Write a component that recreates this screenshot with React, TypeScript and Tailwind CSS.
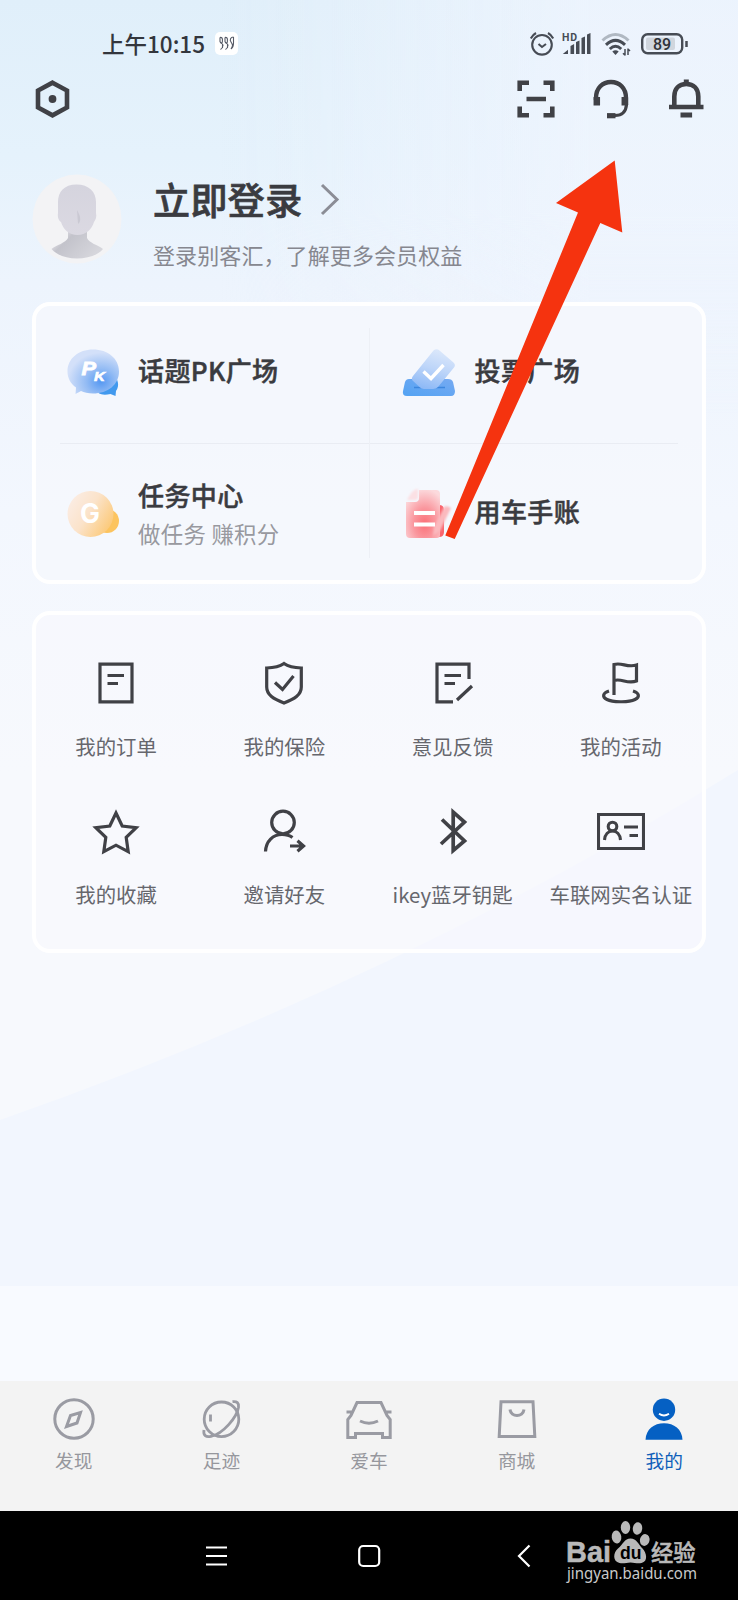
import type { ReactNode } from "react";

const INK = "#404146";

function Stroke({ w, h, width = 2.6, color = INK, children }: { w: number; h: number; width?: number; color?: string; children: ReactNode }) {
  return (
    <svg width={w} height={h} viewBox={`0 0 ${w} ${h}`} fill="none" stroke={color} strokeWidth={width} className="block shrink-0">
      {children}
    </svg>
  );
}

function StatusBar() {
  return (
    <div className="flex h-16 items-center pt-[23px] pl-[102px] pr-[50px]">
      <span className="-mt-[2px] w-[103px] text-[22.5px] leading-8 font-medium whitespace-nowrap text-[#33363d]">上午10:15</span>
      <svg width="23" height="23" viewBox="0 0 23 23" className="ml-[10px] block">
        <rect width="23" height="23" rx="5" fill="#fff" />
        <g fill="none" stroke="#555a66" strokeWidth="1.100">
          <path d="M5 5.500c3-1 3 4 1.500 6.500M5 5.500v4c1 3 3 1 3 4-.5 3-2.500 4-2.500 4M7.500 12v4" />
          <path d="M10 5.500c3-1 3 4 1.500 6.500M10 5.500v4c1 3 3 1 3 4-.5 3-2.500 4-2.500 4M12.500 12v4" />
          <path d="M18.500 5c-3 0-4 3-2.500 5 2 3 2 4 0 7M18.500 5v6c0 4-1 5-2.500 6" />
        </g>
      </svg>
      <div className="ml-auto flex items-center">
        <Stroke w={24} h={24} width={2.1} color="#474c55">
          <circle cx="12" cy="12.800" r="9.800" />
          <path d="M8.500 12l3.500 3 4-3M.8 6.500Q2.500 3 6 1M23.200 6.500Q21.500 3 18 1" />
        </Stroke>
        <svg width="29" height="24" viewBox="0 0 29 24" className="ml-2 block" fill="#474c55">
          <text x="0" y="8.800" fontSize="10.500" fontWeight="700" letterSpacing="0.800" fontFamily="Roboto, sans-serif">HD</text>
          <path d="M.8 22l5.200-4.200V22zM8.500 14l3.600-2v10H8.500zM14 10l3.500-1.500V22h-3.500zM19.500 6l3.500-1.500V22h-3.500zM25 2.500l3.500-1.500v21h-3.500z" />
        </svg>
        <svg width="30" height="24" viewBox="0 0 30 24" className="ml-[10px] block" fill="none">
          <path d="M1.500 8.500Q14.500-3.500 27.500 8.500" stroke="#b0b8c2" strokeWidth="3" />
          <path d="M5 12.800Q14.500 4 24 12.800M8.800 17Q14.500 11.500 20.200 17" stroke="#474c55" strokeWidth="3" />
          <path d="M11.300 19.500q3.200-2.500 6.400 0L14.500 23z" fill="#474c55" />
          <path d="M24 17v6.500M24 23.300l-2-2M27 23v-6.500M27 17l2 2" stroke="#474c55" strokeWidth="1.500" />
        </svg>
        <svg width="47" height="22" viewBox="0 0 47 22" className="ml-[10px] block">
          <rect x="1.200" y="1.200" width="40" height="19" rx="5.500" fill="none" stroke="#474c55" strokeWidth="2.400" />
          <rect x="5" y="4.500" width="29" height="12.500" rx="2" fill="#d0d6de" />
          <path d="M45.500 8v6" stroke="#474c55" strokeWidth="2.500" />
          <text x="21" y="16.500" textAnchor="middle" fontSize="16" fontWeight="500" fill="#2f333a" fontFamily="Roboto, sans-serif">89</text>
        </svg>
      </div>
    </div>
  );
}

function Toolbar() {
  return (
    <div className="flex h-[69px] items-center pl-[35px] pr-[34px]">
      <Stroke w={35} h={40} width={4.6}>
        <path d="M17.500 3.700l14.500 7.900v16.800l-14.500 7.900L3 28.400V11.600z" />
        <circle cx="17.500" cy="20" r="3.900" fill={INK} stroke="none" />
      </Stroke>
      <div className="ml-auto flex items-center gap-[38px]">
        <Stroke w={38} h={38} width={4.6}>
          <path d="M2.700 11V2.700H12M26.500 2.700h8.800V11M2.700 26.500v8.800H12M26.500 35.300h8.800v-8.800M9.500 19h19.500" />
        </Stroke>
        <Stroke w={37} h={40} width={4.4}>
          <path d="M3 21v-2C3 9 9.500 3 18 3s15 6 15 16v7" />
          <path d="M3.800 18v8.500M31.800 18v8.500" strokeWidth="6.500" />
          <path d="M33.500 25.500c-.5 7-4.500 11-11.500 11" strokeWidth="3.200" />
          <path d="M14 36.700h8.500" strokeWidth="5.200" />
        </Stroke>
        <Stroke w={36} h={40} width={4.6}>
          <path d="M1 28h34.500" />
          <path d="M6.300 28V17.500C6.300 9.500 11 5 18.300 5s12 4.500 12 12.500V28" />
          <path d="M18.300 .5v5M12.500 36h11.600" strokeWidth="5" />
        </Stroke>
      </div>
    </div>
  );
}

function Profile() {
  return (
    <div className="flex h-[169px] items-start pt-[41px] pl-8">
      <svg width="90" height="90" viewBox="0 0 90 90" className="block shrink-0">
        <defs>
          <linearGradient id="neck" x1="0" y1="0" x2="1" y2="0.600">
            <stop offset="0.300" stopColor="#d4d3da" />
            <stop offset="0.400" stopColor="#c3c3cb" />
            <stop offset="1" stopColor="#d6d6dc" />
          </linearGradient>
          <linearGradient id="face" x1="0" y1="0" x2="0" y2="1">
            <stop offset="0" stopColor="#d5d4de" />
            <stop offset="1" stopColor="#dbd9e2" />
          </linearGradient>
        </defs>
        <circle cx="45" cy="45" r="44.500" fill="#f3f3f5" />
        <path d="M36 54h19v10c2 5 11 7 16 11-5 6-15 9.500-26 9.500S25 81 19.500 75c5-4 14-6 16.500-11z" fill="url(#neck)" />
        <path d="M44.500 10.500C57 10.500 64 18 64 28v11c1 4-.5 7-2 9-2 7-8 13-16.500 13S31 55 29 48c-3-2-3.500-6-3-9V28c0-10 6-17.500 18.500-17.500z" fill="url(#face)" />
        <path d="M45 36c3 5 5 11 1 14z" fill="#cac9d3" />
      </svg>
      <div className="ml-[31px] flex flex-col">
        <div className="-mt-0.5 flex h-[54px] items-center">
          <span className="text-[37px] leading-[54px] font-medium tracking-[0.4px] text-[#3a3b40] [-webkit-text-stroke:0.7px_#3a3b40]">立即登录</span>
          <svg width="20" height="34" viewBox="0 0 20 34" fill="none" className="mt-px ml-[17px] block">
            <path d="M2 2L17 16.500 2 31" stroke="#8b8d96" strokeWidth="3" />
          </svg>
        </div>
        <p className="mt-3 text-[22px] leading-8 tracking-[0.1px] text-[#86878f]">登录别客汇，了解更多会员权益</p>
      </div>
    </div>
  );
}

function PkIcon() {
  return (
    <svg width="54" height="50" viewBox="0 0 54 50" className="block">
      <defs>
        <radialGradient id="pk" cx="0.650" cy="0.720" r="0.650">
          <stop offset="0" stopColor="#5598f2" />
          <stop offset="0.450" stopColor="#94bcf4" />
          <stop offset="1" stopColor="#d3e0f9" />
        </radialGradient>
      </defs>
      <path d="M47 27c5 3 7 11 3 16l-.5 5-5-2c-5 1-9 1-12-1z" fill="#4199ee" />
      <path d="M27 1.500c15 0 26 9 26 22s-11 22-26 22c-5 0-9-1-12-2.500l-5.500 3 .5-6.500C4.500 35.500 1.500 30 1.500 23.500c0-13 11-22 25.500-22z" fill="url(#pk)" />
      <text x="15.500" y="27" fontSize="19" fontWeight="700" fontStyle="italic" textLength="14.500" lengthAdjust="spacingAndGlyphs" fill="#fff" stroke="#fff" strokeWidth="0.800" fontFamily="Liberation Sans, sans-serif">P</text>
      <text x="28" y="32.500" fontSize="12.500" fontWeight="700" fontStyle="italic" textLength="11" lengthAdjust="spacingAndGlyphs" fill="#fff" stroke="#fff" strokeWidth="0.600" fontFamily="Liberation Sans, sans-serif">K</text>
    </svg>
  );
}

function VoteIcon() {
  return (
    <svg width="54" height="50" viewBox="0 0 54 50" className="-ml-px block">
      <defs>
        <linearGradient id="tray" x1="0" y1="1" x2="1" y2="0">
          <stop offset="0" stopColor="#53a3f3" />
          <stop offset="1" stopColor="#76aaf2" />
        </linearGradient>
        <linearGradient id="slip" x1="0.700" y1="0" x2="0.400" y2="1">
          <stop offset="0" stopColor="#dde9fb" />
          <stop offset="0.500" stopColor="#bdd5f9" />
          <stop offset="1" stopColor="#8fbaf6" />
        </linearGradient>
      </defs>
      <path d="M7 31h39q4 0 5 3l2 9q0 5-4 5H5q-5 0-4-5l2-9q1-3 4-3z" fill="url(#tray)" />
      <path d="M12 39.500h31" stroke="#3c87de" strokeWidth="1.500" />
      <path d="M31.500 2.500q3-2.500 6 0l14 12q2.500 2.500.5 5L36 39q-2 2-5 2h-9q-2.500 0-4.500-2l-7-6.500q-1.500-2 .5-4.500z" fill="url(#slip)" />
      <path d="M21.500 23.500l7.500 7L41.500 17" fill="none" stroke="#fff" strokeWidth="3.400" />
    </svg>
  );
}

function CoinIcon() {
  return (
    <svg width="54" height="50" viewBox="0 0 54 50" className="block">
      <defs>
        <linearGradient id="coin" x1="0" y1="0.100" x2="1" y2="0.700">
          <stop offset="0" stopColor="#fbeee8" />
          <stop offset="0.500" stopColor="#fbe3ca" />
          <stop offset="1" stopColor="#fcc977" />
        </linearGradient>
      </defs>
      <circle cx="41" cy="32" r="12" fill="#fcc45f" />
      <circle cx="24.500" cy="25" r="23" fill="url(#coin)" />
      <text x="24" y="34" textAnchor="middle" fontSize="26.500" fontWeight="700" fill="#fff" fontFamily="Inter, sans-serif">G</text>
    </svg>
  );
}

function LedgerIcon() {
  return (
    <svg width="54" height="54" viewBox="0 0 54 54" className="-ml-0.5 block">
      <defs>
        <radialGradient id="sheet" cx="0.550" cy="0.700" r="0.720">
          <stop offset="0" stopColor="#fb7078" />
          <stop offset="0.450" stopColor="#fa979e" />
          <stop offset="1" stopColor="#fcdadd" />
        </radialGradient>
        <filter id="haze" x="-20%" y="-20%" width="140%" height="140%">
          <feGaussianBlur stdDeviation="0.800" />
        </filter>
      </defs>
      <path d="M33 18h5q5 0 5 5v22q0 5-5 5h-5z" fill="#f9656d" />
      <path d="M18 3h17q4 0 4 4v41q0 3-3 3H9q-4 0-4-4V15h9q4 0 4-4z" fill="url(#sheet)" />
      <path d="M6 13Q12 1 17 2v8q0 3-3 3z" fill="#fbe0e4" filter="url(#haze)" />
      <path d="M43 20q3-2 7 1L39 44l-7 5 1-9z" fill="#fbb9be" filter="url(#haze)" />
      <path d="M13 26h21M13 37.500h21" stroke="#fff" strokeWidth="4" />
    </svg>
  );
}

function Feature({ icon, title, note }: { icon: ReactNode; title: string; note?: string }) {
  return (
    <div className="flex items-center pl-[34px]">
      <div className="w-[54px] shrink-0">{icon}</div>
      <div className={note ? "ml-[18px] flex flex-col gap-1" : "-mt-[5px] ml-[18px] flex flex-col"}>
        <span className="text-[26px] leading-[34px] font-medium tracking-[0.400px] text-[#3a3b40] [-webkit-text-stroke:0.5px_#3a3b40]">{title}</span>
        {note && <span className="text-[22.400px] leading-[34px] tracking-[0.300px] text-[#98999f]">{note}</span>}
      </div>
    </div>
  );
}

function Features() {
  return (
    <section className="relative mx-8 grid h-[282px] grid-cols-2 grid-rows-2 rounded-[18px] bg-[#f5f8fd]/80 pr-px ring-4 ring-white ring-inset">
      <Feature icon={<PkIcon />} title="话题PK广场" />
      <Feature icon={<VoteIcon />} title="投票广场" />
      <Feature icon={<CoinIcon />} title="任务中心" note="做任务 赚积分" />
      <Feature icon={<LedgerIcon />} title="用车手账" />
      <div className="absolute inset-x-7 top-[141px] h-px bg-[#e9ecf3]" />
      <div className="absolute inset-y-[26px] left-[337px] w-px bg-[#edf0f6]" />
    </section>
  );
}

const services: { label: string; icon: ReactNode }[] = [
  {
    label: "我的订单",
    icon: (
      <Stroke w={48} h={48} width={3.2}>
        <path d="M8 5.200h32v37.600H8zM15.500 16.500h16.500M15.500 24.500h10.500" />
      </Stroke>
    ),
  },
  {
    label: "我的保险",
    icon: (
      <Stroke w={48} h={48} width={3.2}>
        <path d="M24 4.500c5 3.500 11 4.300 17.300 4.500v19c0 8-7 12-17.300 16-10.300-4-17.300-8-17.300-16V9C13 8.800 19 8 24 4.500z" />
        <path d="M15 23.500l7.500 7L33.500 17" />
      </Stroke>
    ),
  },
  {
    label: "意见反馈",
    icon: (
      <Stroke w={48} h={48} width={3.2}>
        <path d="M24 42.800H8V5.200h32V20M15.500 16.500h16.500M15.500 24.500h10.500M28 41L43 27" />
      </Stroke>
    ),
  },
  {
    label: "我的活动",
    icon: (
      <Stroke w={48} h={48} width={3.2}>
        <path d="M17 36V5.500c8-2.500 13 3.500 22.500.5v16c-9.500 3.500-14.500-3-22.500-.5" />
        <path d="M12 32c-6.500 2-7 6-2 8.500s21 3.500 28 0c5-2.500 4.500-6.500-2-8.500" />
      </Stroke>
    ),
  },
  {
    label: "我的收藏",
    icon: (
      <Stroke w={48} h={48} width={3.2}>
        <path d="M24 6l6.200 13 14 1.600-10 9.800 2 14.300L24 38.200l-12.200 6.500 2-14.300-10-9.800 14-1.600z" />
      </Stroke>
    ),
  },
  {
    label: "邀请好友",
    icon: (
      <Stroke w={48} h={48} width={3.2}>
        <circle cx="23" cy="15.500" r="11.300" />
        <path d="M5.500 44.500C6 34 13 27.500 22 27.500c4 0 7.500.8 10.500 3M30 39h13M37.500 33.800l6 5.200-6 5.200" />
      </Stroke>
    ),
  },
  {
    label: "ikey蓝牙钥匙",
    icon: (
      <Stroke w={48} h={48} width={3.7}>
        <path d="M13 12.500L35.500 34 24.200 43.500V5L35.500 15 12 37" />
      </Stroke>
    ),
  },
  {
    label: "车联网实名认证",
    icon: (
      <Stroke w={48} h={48} width={3.1}>
        <path d="M1.500 7.500h45v34h-45z" />
        <circle cx="15.500" cy="19.500" r="4.300" />
        <path d="M7.500 33c.5-6 4-9 8-9s7.500 3 8 9M27 20h14M32.500 28.500h8.500" />
      </Stroke>
    ),
  },
];

function Services() {
  return (
    <section className="mx-8 mt-[27px] grid h-[342px] grid-cols-4 content-start gap-y-[46px] rounded-[18px] bg-[#f8f9fd]/60 pt-12 pr-px ring-4 ring-white ring-inset">
      {services.map((s) => (
        <div key={s.label} className="flex flex-col items-center gap-[25px] pb-px">
          {s.icon}
          <span className="text-[20.400px] leading-7 whitespace-nowrap text-[#66676d]">{s.label}</span>
        </div>
      ))}
    </section>
  );
}

const GREY = "#9a9ba3";

const tabs: { label: string; active?: boolean; icon: ReactNode }[] = [
  {
    label: "发现",
    icon: (
      <Stroke w={44} h={44} width={3} color={GREY}>
        <circle cx="22" cy="22" r="19.200" />
        <path d="M28.500 15.500l-3.500 10.500-10.500 3.500 4-11z" />
      </Stroke>
    ),
  },
  {
    label: "足迹",
    icon: (
      <Stroke w={44} h={44} width={2.8} color={GREY}>
        <circle cx="22.500" cy="22.300" r="17.300" />
        <path d="M33.500 4.700c4.500-.5 6.500 1 6 5.500C38 20 24 37 12 39.300c-5 1-8-.5-7-6.300M11.500 17.500v7" />
      </Stroke>
    ),
  },
  {
    label: "爱车",
    icon: (
      <Stroke w={48} h={44} width={3} color={GREY}>
        <path d="M12 5.500h24l6 13 3.200 4V40.500H37.500v-4h-27v4H2.800V22.500l3.200-4zM1.500 15H8M46.500 15H40M15 24c6 3 12 3 18 0" />
      </Stroke>
    ),
  },
  {
    label: "商城",
    icon: (
      <Stroke w={44} h={44} width={3} color={GREY}>
        <path d="M6 4.700h32l1.800 34.800h-35.600zM15 12.500c1 8 13 8 14 0" />
      </Stroke>
    ),
  },
  {
    label: "我的",
    active: true,
    icon: (
      <svg width="44" height="44" viewBox="0 0 44 44" className="block">
        <circle cx="22" cy="12.700" r="11.200" fill="#0560c3" />
        <path d="M3.500 42.700C4 32 12 26.200 22 26.200S40 32 40.500 42.700z" fill="#0560c3" />
        <path d="M17 16.800c3 2 7 2 10 0" fill="none" stroke="#fff" strokeWidth="1.900" />
      </svg>
    ),
  },
];

function TabBar() {
  return (
    <nav className="grid h-[130px] grid-cols-5 items-start bg-[#f3f3f3] pt-[16px]">
      {tabs.map((t) => (
        <div key={t.label} className={t.active ? "flex flex-col items-center gap-[7px] text-[#0f5fba]" : "flex flex-col items-center gap-[7px] text-[#96979d]"}>
          {t.icon}
          <span className="text-[18.700px] leading-6">{t.label}</span>
        </div>
      ))}
    </nav>
  );
}

function SystemNav() {
  return (
    <div className="flex h-[89px] items-center bg-black pl-[206px]">
      <Stroke w={22} h={22} width={2} color="#fff">
        <path d="M0 2.500h21M0 11h21M0 19.500h21" />
      </Stroke>
      <div className="ml-[129px]">
        <Stroke w={24} h={24} width={2.2} color="#fff">
          <rect x="2.200" y="2" width="20" height="20" rx="4" />
        </Stroke>
      </div>
      <div className="ml-[136px]">
        <Stroke w={14} h={24} width={2.2} color="#fff">
          <path d="M12.500 1.500L2 12l10.500 10.500" />
        </Stroke>
      </div>
    </div>
  );
}

function Watermark() {
  return (
    <svg width="140" height="76" viewBox="0 0 140 76" className="absolute top-[1519px] left-[564px] block" fill="#b9b9b9">
      <text x="2" y="42.500" fontSize="29.500" fontWeight="700" textLength="45" lengthAdjust="spacingAndGlyphs" stroke="#b9b9b9" strokeWidth="0.500" fontFamily="Liberation Sans, sans-serif">Bai</text>
      <ellipse cx="52.500" cy="18" rx="4.800" ry="6.500" transform="rotate(-8 52.500 18)" />
      <ellipse cx="61.500" cy="8.500" rx="4.700" ry="6.500" />
      <ellipse cx="73.500" cy="9.500" rx="4.700" ry="6.300" transform="rotate(8 73.500 9.500)" />
      <ellipse cx="80.700" cy="21" rx="4.800" ry="6" transform="rotate(12 80.700 21)" />
      <path d="M66.500 19.500c6 0 8 6 12 10s6 13-1 14.500c-4 1-7-.5-11-.5s-7 1.500-11 .5c-7-1.500-6.500-10.500-1.500-14.500s6.500-10 12.500-10z" />
      <text x="56" y="40" fontSize="18.500" fontWeight="700" fill="#000" textLength="21.500" lengthAdjust="spacingAndGlyphs" fontFamily="Liberation Sans, sans-serif">du</text>
      <text x="87" y="41.500" fontSize="22.300" fontWeight="500" stroke="#b9b9b9" strokeWidth="0.500" fontFamily="Noto Sans CJK SC, sans-serif">经验</text>
      <text x="3" y="59.500" fontSize="16.500" fill="#c9c9c9" textLength="130" lengthAdjust="spacingAndGlyphs" fontFamily="Noto Sans, sans-serif">jingyan.baidu.com</text>
    </svg>
  );
}

export default function App() {
  return (
    <div className="relative flex h-[1600px] w-[738px] flex-col overflow-hidden bg-[#f8faff] font-['Noto_Sans_CJK_SC',sans-serif]">
      <main className="relative flex h-[1286px] flex-col bg-[linear-gradient(180deg,#e0effa_0%,#e5f2fc_12%,#edf4fd_22%,#f3f7fe_40%,#f7f9fd_60%)]">
        <div className="absolute inset-x-0 top-0 h-[420px] bg-[linear-gradient(90deg,rgba(241,244,254,0)_30%,rgba(240,245,254,0.75)_80%)] [mask-image:linear-gradient(180deg,#000_50%,transparent)]" />
        <svg width="738" height="1286" viewBox="0 0 738 1286" className="absolute inset-0 block">
          <path d="M0 1120Q400 980 738 770V1286H0z" fill="#f2f6fe" />
        </svg>
        <div className="relative flex flex-col">
          <StatusBar />
          <Toolbar />
          <Profile />
          <Features />
          <Services />
        </div>
      </main>
      <div className="h-[95px]" />
      <TabBar />
      <SystemNav />
      <svg width="180" height="384" viewBox="0 0 180 384" className="absolute top-[158px] left-[444px] block">
        <path d="M170.700 2.500l7.600 72-22-9.500L10.700 381 1.300 377.500 134 54.500 112 45z" fill="#f5330f" />
      </svg>
      <Watermark />
    </div>
  );
}
